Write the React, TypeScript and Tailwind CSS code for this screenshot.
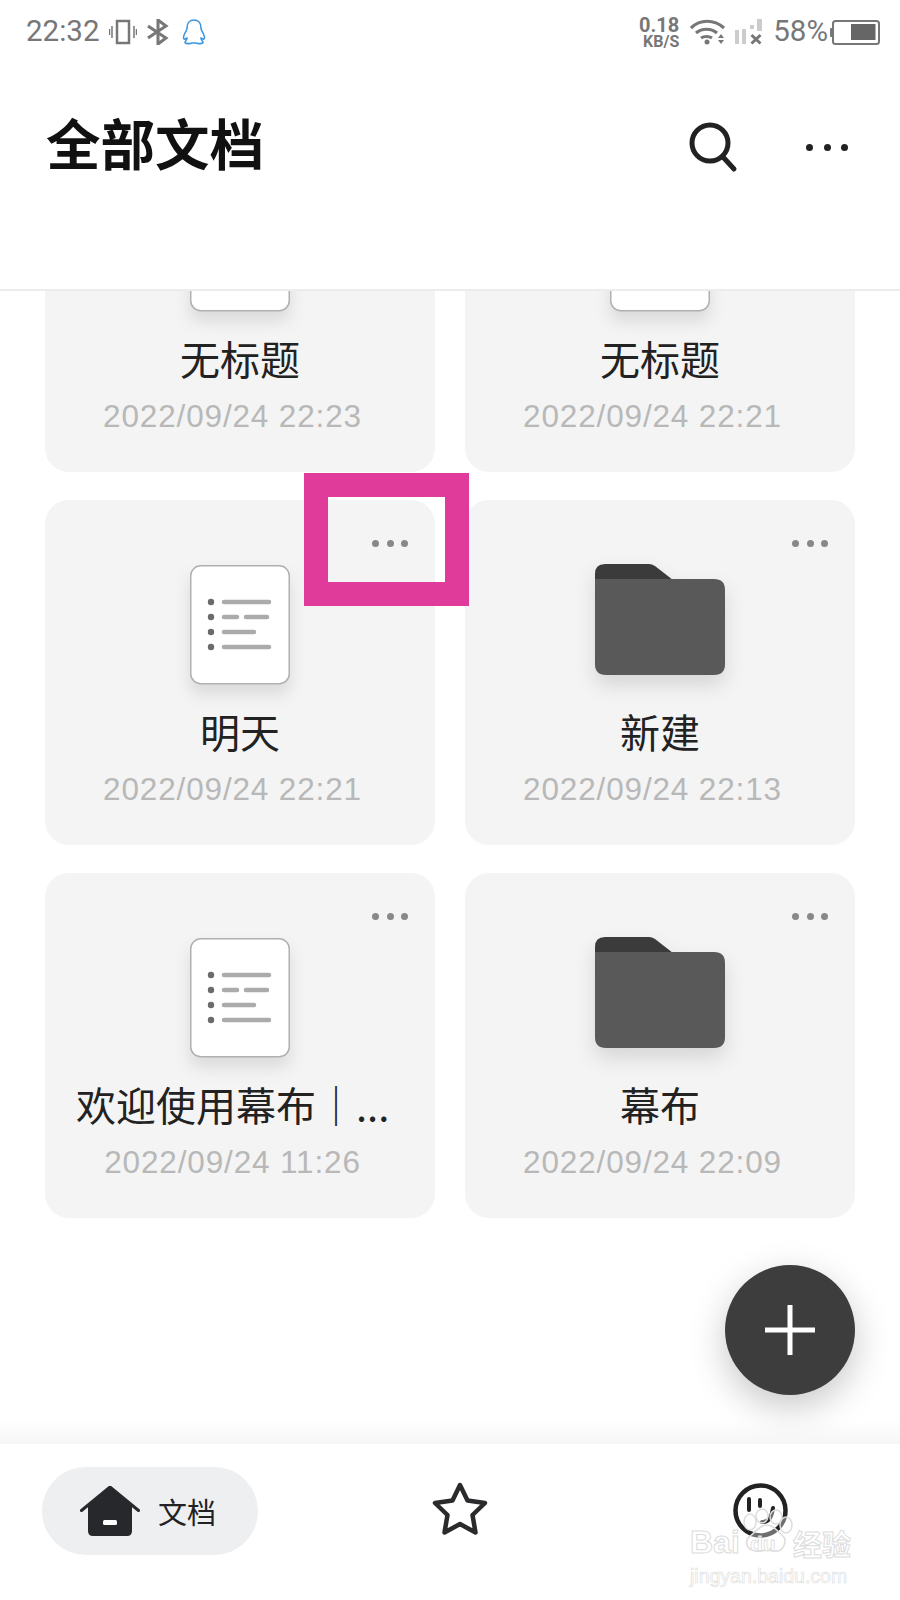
import React from 'react';

const SANS = 'font-["Noto_Sans_CJK_SC","Noto_Sans",sans-serif]';

type CardData = { title: string; date: string; kind: 'doc' | 'folder' };

const rows: CardData[][] = [
  [
    { title: '无标题', date: '2022/09/24 22:23', kind: 'doc' },
    { title: '无标题', date: '2022/09/24 22:21', kind: 'doc' },
  ],
  [
    { title: '明天', date: '2022/09/24 22:21', kind: 'doc' },
    { title: '新建', date: '2022/09/24 22:13', kind: 'folder' },
  ],
  [
    { title: '欢迎使用幕布｜...', date: '2022/09/24 11:26', kind: 'doc' },
    { title: '幕布', date: '2022/09/24 22:09', kind: 'folder' },
  ],
];

const DocIcon = () => (
  <svg width="100" height="120" viewBox="0 0 100 120" className="drop-shadow-[0_10px_8px_rgba(0,0,0,0.1)]">
    <rect x="0.75" y="0.75" width="98.5" height="118" rx="10" fill="#fff" stroke="#b0b0b0" strokeWidth="1.5" />
    <g fill="#6b6b6b">
      <circle cx="21" cy="37" r="3.2" />
      <circle cx="21" cy="52" r="3.2" />
      <circle cx="21" cy="67" r="3.2" />
      <circle cx="21" cy="82" r="3.2" />
    </g>
    <g stroke="#ababab" strokeWidth="4.5" strokeLinecap="round">
      <path d="M34 37h45" />
      <path d="M34 52h13M56 52h21" />
      <path d="M34 67h30" />
      <path d="M34 82h45" />
    </g>
  </svg>
);

const FolderIcon = () => (
  <svg width="130" height="111" viewBox="0 0 130 111" className="-mt-[1px] drop-shadow-[0_10px_10px_rgba(0,0,0,0.12)]">
    <path d="M0 16V10Q0 0 10 0h44q3 0 6 2l18 14z" fill="#3b3b3b" />
    <path d="M0 15h119q11 0 11 11v74q0 11-11 11H11Q0 111 0 100z" fill="#595959" />
  </svg>
);

const Card: React.FC<CardData & { clipped?: boolean }> = ({ title, date, kind, clipped }) => (
  <div className={`relative h-[345px] rounded-[24px] bg-[#f4f4f4] flex flex-col items-center ${clipped ? '-mt-[164px]' : ''}`}>
    <div className="absolute right-[27px] top-[40px] flex gap-[7.5px]">
      <span className="w-[7px] h-[7px] rounded-full bg-[#888]" />
      <span className="w-[7px] h-[7px] rounded-full bg-[#888]" />
      <span className="w-[7px] h-[7px] rounded-full bg-[#888]" />
    </div>
    <div className="h-[184px] pt-[65px] flex justify-center">
      {kind === 'doc' ? <DocIcon /> : <FolderIcon />}
    </div>
    <div className={`w-full mt-[22px] text-[40px] leading-[50px] text-[#222] whitespace-nowrap ${title.length > 6 ? 'pl-[31px] text-left' : 'text-center'}`}>
      {title}
    </div>
    <div className="mt-[15px] pr-[15px] font-['Liberation_Sans',sans-serif] text-[31.5px] leading-[36px] tracking-[0.85px] text-[#b8b8b8]">
      {date}
    </div>
  </div>
);

const StatusBar = () => (
  <div className="h-[64px] flex items-center justify-between pl-[26px] pr-[20px] text-[#777] font-['Roboto',sans-serif]">
    <div className="flex items-center">
      <span className="text-[29.5px] leading-none w-[83px]">22:32</span>
      <svg width="28" height="26" viewBox="0 0 28 26" fill="none" stroke="#777" strokeWidth="2.5">
        <rect x="8" y="2" width="12" height="22" />
        <path d="M3 7v12M25 7v12M0.5 10v6M27.5 10v6" strokeWidth="1.5" />
      </svg>
      <svg width="22" height="26" viewBox="0 0 22 26" fill="none" stroke="#777" strokeWidth="3" className="ml-[10px]">
        <path d="M1 7l18 12-8 6V1l8 6L1 19" />
      </svg>
      <svg width="26" height="28" viewBox="0 0 26 28" fill="none" stroke="#3a96e0" strokeWidth="1.6" className="ml-[12px]">
        <path d="M6 10c0-5 3-8 7-8s7 3 7 8c0 2 1 3 2 5s2 5 1 6-2-1-3-1c0 2 1 3 2 4 0 2-5 2-7 1h-4c-2 1-7 1-7-1 1-1 2-2 2-4-1 0-2 2-3 1s0-4 1-6 2-3 2-5z" />
      </svg>
    </div>
    <div className="flex items-center">
      <div className="flex flex-col items-end font-bold mr-[11px]">
        <span className="text-[20px] leading-[18px]">0.18</span>
        <span className="text-[16px] leading-[15px]">KB/S</span>
      </div>
      <svg width="36" height="28" viewBox="0 0 36 28" fill="none" stroke="#777" strokeWidth="3.2">
        <path d="M1 10C10 1 24 1 34 10" />
        <path d="M6 15c6-5 15-5 21 0" />
        <path d="M11 20c3-2 8-2 11 0" />
        <circle cx="17" cy="24" r="2.5" fill="#777" stroke="none" />
        <path d="M31 16l-3 4h6zM31 26l-3-4h6z" fill="#777" stroke="none" />
      </svg>
      <svg width="28" height="26" viewBox="0 0 28 26" className="ml-[9px]">
        <rect x="0" y="11" width="4" height="14" fill="#ccc" />
        <rect x="7" y="10" width="4" height="15" fill="#ccc" />
        <rect x="15" y="6" width="4" height="4" fill="#ccc" />
        <rect x="22" y="0" width="5" height="12" fill="#ccc" />
        <path d="M16.5 16l9 8.5M25.5 16l-9 8.5" stroke="#777" strokeWidth="3" />
      </svg>
      <span className="ml-[10px] mr-[2px] text-[29.5px] leading-none">58%</span>
      <svg width="50" height="28" viewBox="0 0 50 28">
        <rect x="0" y="10" width="3" height="9" rx="1" fill="#777" />
        <rect x="3" y="3" width="46" height="23" rx="2.5" fill="none" stroke="#777" strokeWidth="2" />
        <rect x="21" y="6" width="24.5" height="16" fill="#666" />
      </svg>
    </div>
  </div>
);

const Header = () => (
  <div className="h-[227px] border-b-2 border-[#ececec] bg-white">
    <div className="flex items-center pl-[46px] pt-[46px] pr-[52px]">
      <h1 className={`${SANS} flex-1 text-[54.5px] leading-[64px] font-bold text-[#111]`}>全部文档</h1>
      <svg width="50" height="52" viewBox="0 0 50 52" fill="none" stroke="#222" strokeWidth="5" strokeLinecap="round" className="mr-[68px] mt-[10px]">
        <circle cx="22" cy="22" r="18" />
        <path d="M35 36l11 12" />
      </svg>
      <div className="flex gap-[10.5px] mt-[10px]">
        <span className="w-[7px] h-[7px] rounded-full bg-[#222]" />
        <span className="w-[7px] h-[7px] rounded-full bg-[#222]" />
        <span className="w-[7px] h-[7px] rounded-full bg-[#222]" />
      </div>
    </div>
  </div>
);

const BottomNav = () => (
  <div className="relative h-[156px] flex items-start bg-white pl-[42px]">
    <div className="absolute left-0 right-0 -top-[24px] h-[24px] bg-gradient-to-b from-white to-[#f6f6f6]" />
    <div className="mt-[23px] w-[216px] h-[88px] rounded-full bg-[#eeeff1] flex items-center pl-[38px]">
      <svg width="60" height="50" viewBox="0 0 60 50">
        <path d="M1.5 24.5L30 1l28.5 23.5" fill="none" stroke="#27282b" strokeWidth="3" strokeLinecap="round" strokeLinejoin="round" />
        <path d="M30 1L8 19v26q0 5 5 5h34q5 0 5-5V19z" fill="#27282b" />
        <rect x="23" y="34" width="14" height="5" rx="1.5" fill="#fff" />
      </svg>
      <span className={`${SANS} ml-[18px] text-[29px] leading-none text-[#222]`}>文档</span>
    </div>
    <svg width="56" height="54" viewBox="0 0 56 54" fill="none" stroke="#2b2b2d" strokeWidth="4.5" strokeLinejoin="round" className="ml-[174px] mt-[38px]">
      <path d="M28 3l7.5 15.5 17.5 2.5-12.5 12 3 17.5L28 42l-15.5 8.5 3-17.5L3 21l17.5-2.5z" />
    </svg>
    <svg width="56" height="56" viewBox="0 0 56 56" fill="none" stroke="#222" strokeLinecap="round" className="ml-[245px] mt-[39px]">
      <circle cx="27.5" cy="27.5" r="25" strokeWidth="4.5" />
      <path d="M16 16v11M27 17v6" strokeWidth="4" />
      <path d="M29 39q9 1 11-14" strokeWidth="4" />
    </svg>
    {/* baidu watermark */}
    <div className="absolute left-[690px] top-[64px] w-[170px] pointer-events-none">
      <div className="relative h-[48px] flex items-end">
        <span className="font-['Liberation_Sans',sans-serif] font-bold text-[32px] leading-[28px] text-white/70 [-webkit-text-stroke:1px_#dcdcdc]">Bai</span>
        <svg width="54" height="46" viewBox="0 0 54 46" fill="rgba(255,255,255,0.35)" stroke="#dcdcdc" strokeWidth="1.5" className="absolute left-[50px] top-0">
          <ellipse cx="10" cy="14" rx="6" ry="8" />
          <ellipse cx="22" cy="8" rx="6" ry="7" />
          <ellipse cx="36" cy="9" rx="6" ry="7" />
          <ellipse cx="46" cy="17" rx="6" ry="8" />
          <path d="M27 17c7 0 10 6 15 10 6 5 2 17-7 16-3 0-5-1-8-1s-6 2-11 1C6 42 4 33 10 28c6-4 9-11 17-11z" />
        </svg>
        <span className="absolute left-[60px] bottom-[0px] font-['Liberation_Sans',sans-serif] font-bold text-[21px] leading-[24px] text-white/70 [-webkit-text-stroke:0.8px_#dcdcdc]">du</span>
        <span className={`${SANS} absolute left-[103px] bottom-[-3px] text-[29px] leading-[32px] font-bold whitespace-nowrap text-white/70 [-webkit-text-stroke:1px_#dcdcdc]`}>经验</span>
      </div>
      <div className="mt-[9px] font-['Liberation_Sans',sans-serif] text-[19.5px] leading-[22px] whitespace-nowrap text-white [-webkit-text-stroke:0.6px_#dcdcdc]">
        jingyan.baidu.com
      </div>
    </div>
  </div>
);

export default function App() {
  return (
    <div className={`relative w-[900px] h-[1600px] bg-white overflow-hidden flex flex-col ${SANS}`}>
      <StatusBar />
      <Header />
      <div className="flex-1 min-h-0 overflow-hidden px-[45px] flex flex-col gap-[28px]">
        {rows.map((row, i) => (
          <div key={i} className="grid grid-cols-2 gap-x-[30px] shrink-0">
            {row.map((c) => (
              <Card key={c.date} {...c} clipped={i === 0} />
            ))}
          </div>
        ))}
      </div>
      <BottomNav />
      {/* add button */}
      <div className="absolute left-[725px] top-[1265px] w-[130px] h-[130px] rounded-full bg-[#3d3d3d] shadow-[0_12px_36px_rgba(0,0,0,0.22)] flex items-center justify-center">
        <svg width="50" height="50" viewBox="0 0 50 50" fill="#fff">
          <rect x="22.5" y="0" width="5" height="50" />
          <rect x="0" y="22.5" width="50" height="5" />
        </svg>
      </div>
      {/* pink annotation box */}
      <div className="absolute left-[304px] top-[473px] w-[165px] h-[133px] border-[24px] border-[#e03b9b]" />
    </div>
  );
}
